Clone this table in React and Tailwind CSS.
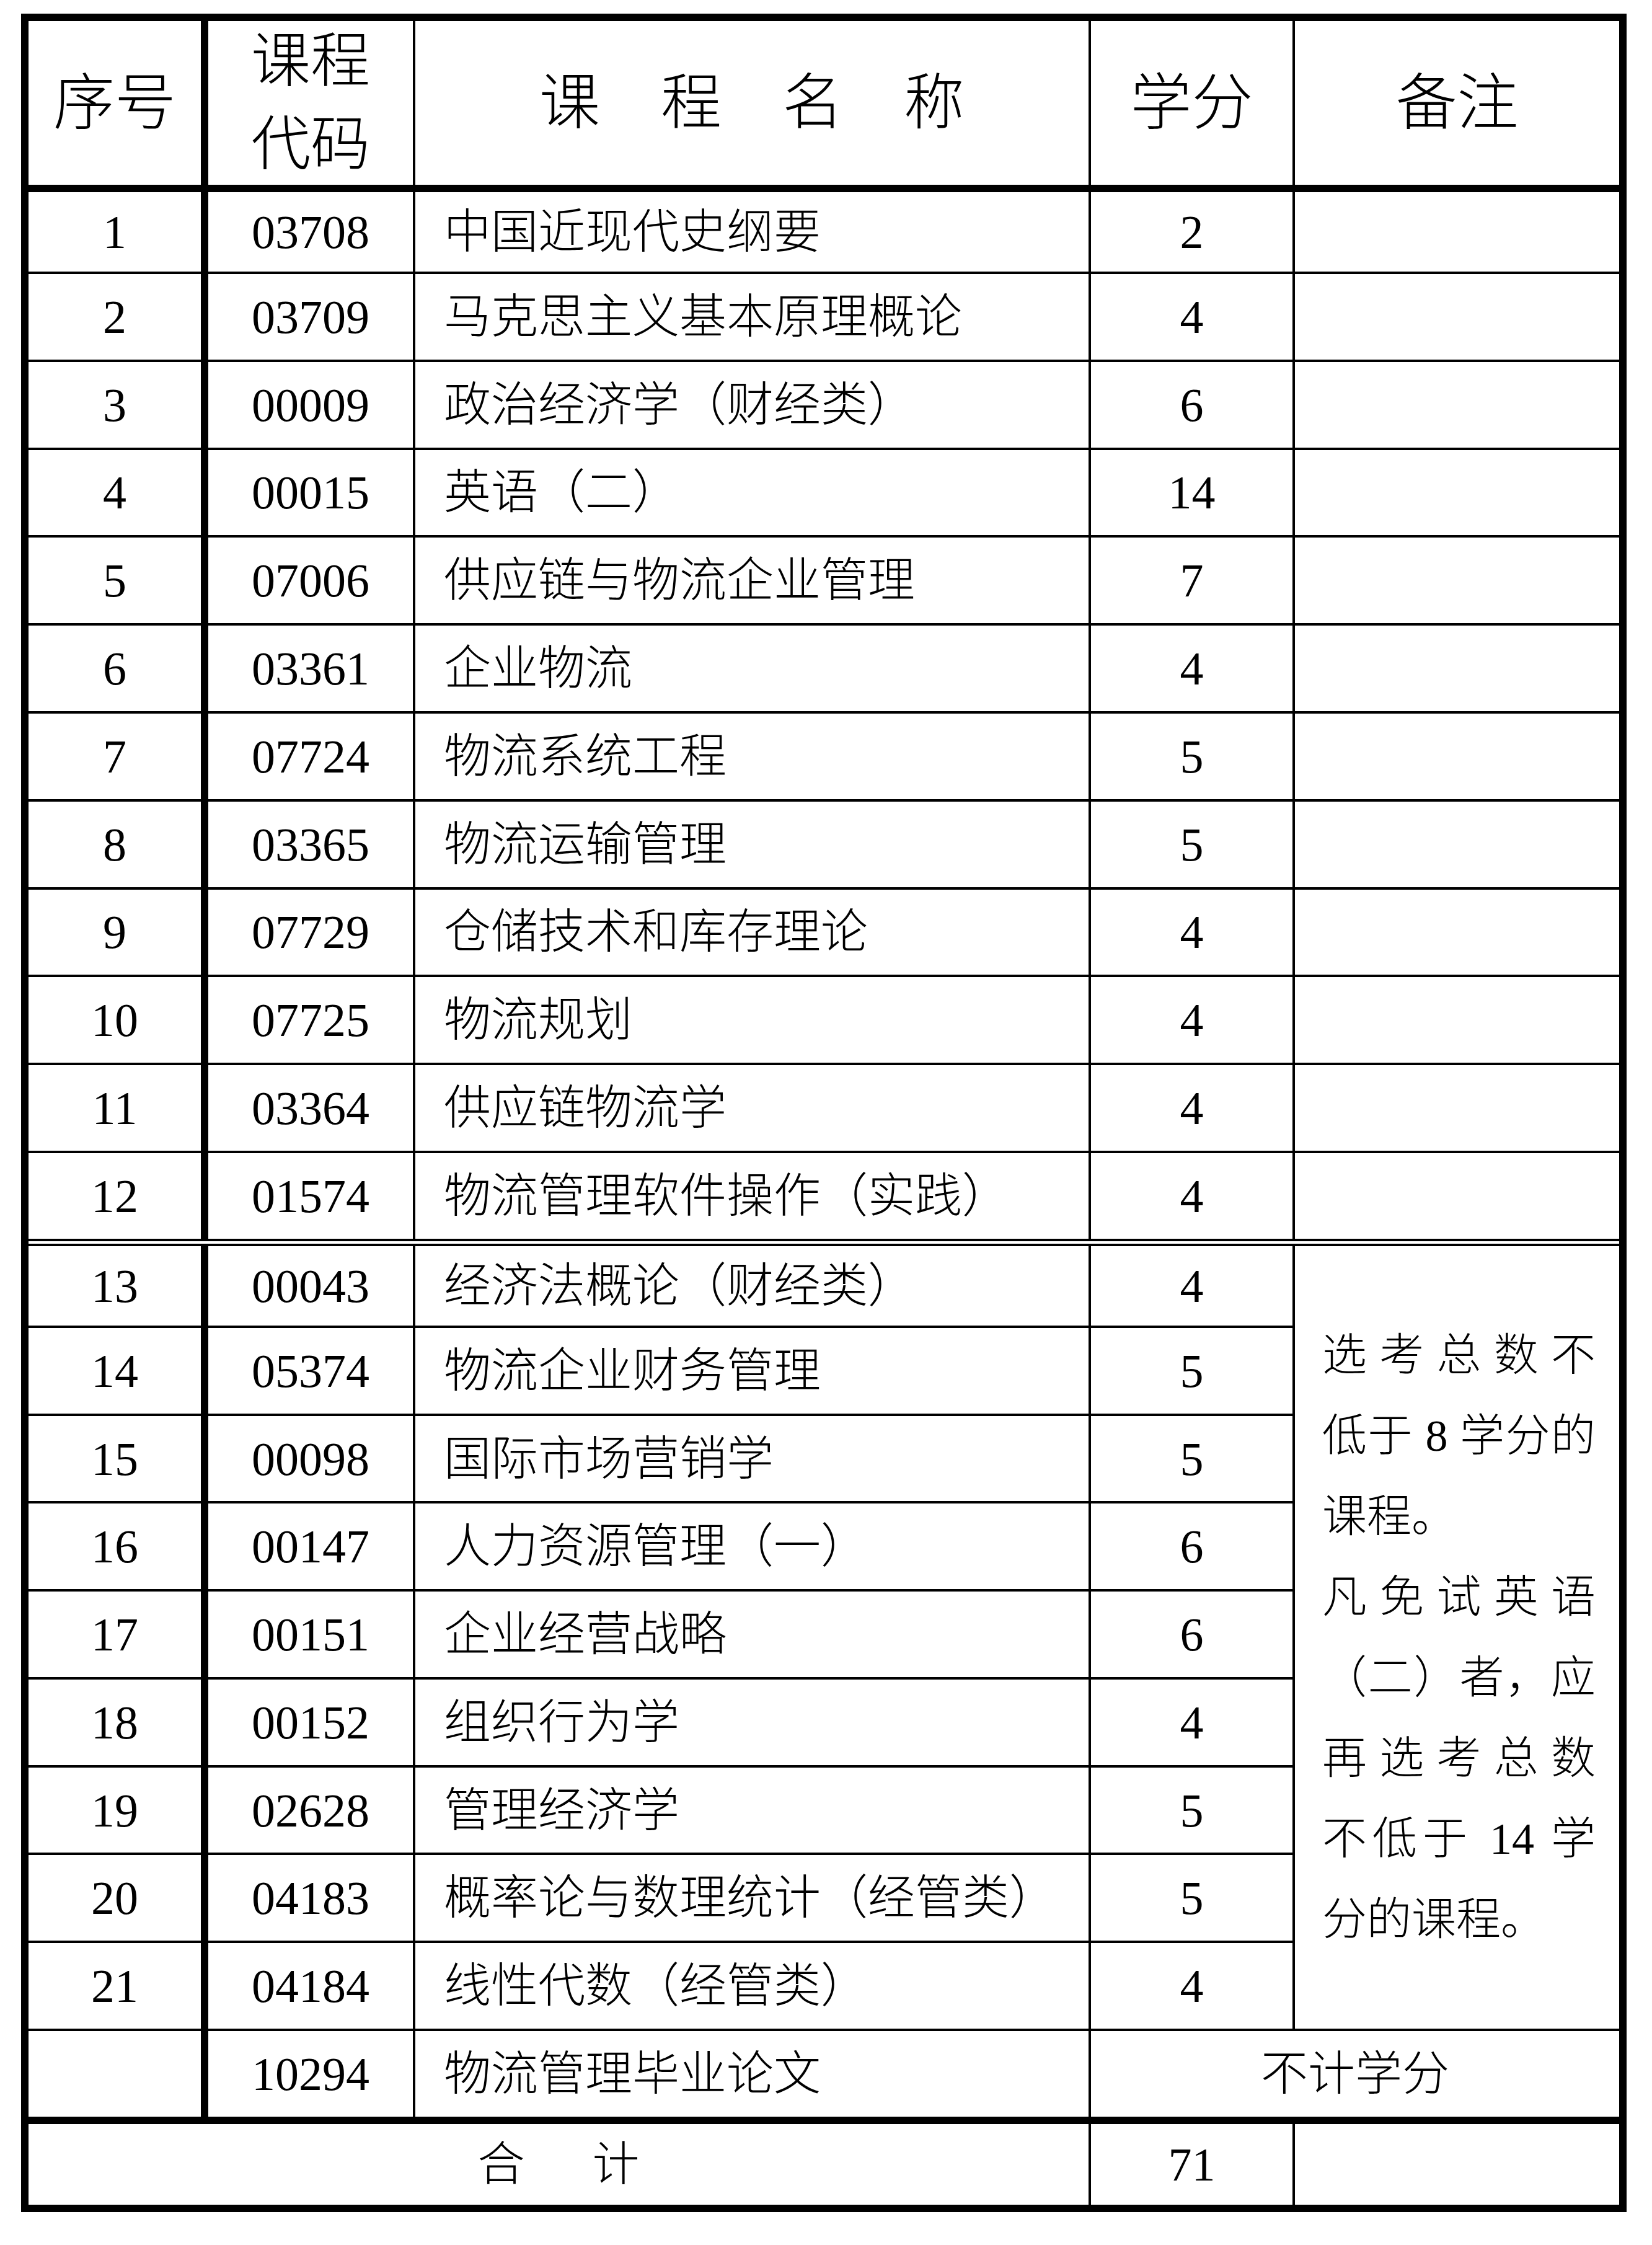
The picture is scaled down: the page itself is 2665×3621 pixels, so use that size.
const serif = "font-['Liberation_Serif','Noto_Sans_CJK_SC',serif]";

const groupA = [
  ['1', '03708', '中国近现代史纲要', '2'],
  ['2', '03709', '马克思主义基本原理概论', '4'],
  ['3', '00009', '政治经济学（财经类）', '6'],
  ['4', '00015', '英语（二）', '14'],
  ['5', '07006', '供应链与物流企业管理', '7'],
  ['6', '03361', '企业物流', '4'],
  ['7', '07724', '物流系统工程', '5'],
  ['8', '03365', '物流运输管理', '5'],
  ['9', '07729', '仓储技术和库存理论', '4'],
  ['10', '07725', '物流规划', '4'],
  ['11', '03364', '供应链物流学', '4'],
  ['12', '01574', '物流管理软件操作（实践）', '4'],
];

const groupB = [
  ['13', '00043', '经济法概论（财经类）', '4'],
  ['14', '05374', '物流企业财务管理', '5'],
  ['15', '00098', '国际市场营销学', '5'],
  ['16', '00147', '人力资源管理（一）', '6'],
  ['17', '00151', '企业经营战略', '6'],
  ['18', '00152', '组织行为学', '4'],
  ['19', '02628', '管理经济学', '5'],
  ['20', '04183', '概率论与数理统计（经管类）', '5'],
  ['21', '04184', '线性代数（经管类）', '4'],
];

const remark = [
  { t: '选考总数不', full: true },
  { t: '低于 8 学分的', full: true },
  { t: '课程。', full: false },
  { t: '凡免试英语', full: true },
  { t: '（二）者，应', full: true },
  { t: '再选考总数', full: true },
  { t: '不低于 14 学', full: true },
  { t: '分的课程。', full: false },
];

function Row({ r, noBottom, withRemark, withEmpty }) {
  const b = noBottom ? '' : 'border-b-4';
  return (
    <>
      <div className={`flex items-center justify-center border-r-[12px] border-black ${b}`}>{r[0]}</div>
      <div className={`flex items-center justify-center border-r-4 border-black ${b}`}>{r[1]}</div>
      <div className={`flex items-center pl-[46px] border-r-4 border-black whitespace-nowrap ${b}`}>{r[2]}</div>
      <div className={`flex items-center justify-center border-r-4 border-black ${b}`}>{r[3]}</div>
      {withEmpty && <div className={`border-black ${b}`} />}
      {withRemark && (
        <div className="row-span-9 flex flex-col justify-center border-b-4 border-black pl-[44px] pr-[38px] text-[72px] leading-[130px]">
          {remark.map((l, i) => (
            <div
              key={i}
              className={l.full ? 'text-justify [text-align-last:justify] whitespace-nowrap' : 'text-left whitespace-nowrap'}
            >
              {l.t}
            </div>
          ))}
        </div>
      )}
    </>
  );
}

export default function App() {
  return (
    <div className={`min-h-[3621px] w-[2665px] bg-white pt-[22px] pl-[34px] text-black font-light ${serif}`}>
      <div className="grid w-[2590px] grid-cols-[290px_334px_1090px_329px_523px] grid-rows-[276px_132px_repeat(10,141.8px)_138px_12px_132px_repeat(8,141.75px)_150px_130px] border-[12px] border-black text-[76px] leading-none">
        {/* header */}
        <div className="flex items-center justify-center border-r-[12px] border-b-[12px] border-black text-[99px]">序号</div>
        <div className="flex flex-col items-center justify-center border-r-4 border-b-[12px] border-black text-[96px] leading-[134px]">
          <span>课程</span>
          <span>代码</span>
        </div>
        <div className="flex items-center justify-center gap-[98px] border-r-4 border-b-[12px] border-black text-[98px]">
          <span>课</span>
          <span>程</span>
          <span>名</span>
          <span>称</span>
        </div>
        <div className="flex items-center justify-center border-r-4 border-b-[12px] border-black text-[99px]">学分</div>
        <div className="flex items-center justify-center border-b-[12px] border-black text-[99px]">备注</div>

        {groupA.map((r, i) => (
          <Row key={r[0]} r={r} noBottom={i === groupA.length - 1} withEmpty />
        ))}

        {/* double rule */}
        <div className="col-span-5 border-y-4 border-black" />

        {groupB.map((r, i) => (
          <Row key={r[0]} r={r} withRemark={i === 0} />
        ))}

        {/* thesis */}
        <div className="border-r-[12px] border-b-[12px] border-black" />
        <div className="flex items-center justify-center border-r-4 border-b-[12px] border-black">10294</div>
        <div className="flex items-center pl-[46px] border-r-4 border-b-[12px] border-black">物流管理毕业论文</div>
        <div className="col-span-2 flex items-center justify-center border-b-[12px] border-black">不计学分</div>

        {/* total */}
        <div className="col-span-3 flex items-center justify-center gap-[109px] border-r-4 border-black">
          <span>合</span>
          <span>计</span>
        </div>
        <div className="flex items-center justify-center border-r-4 border-black">71</div>
        <div />
      </div>
    </div>
  );
}
